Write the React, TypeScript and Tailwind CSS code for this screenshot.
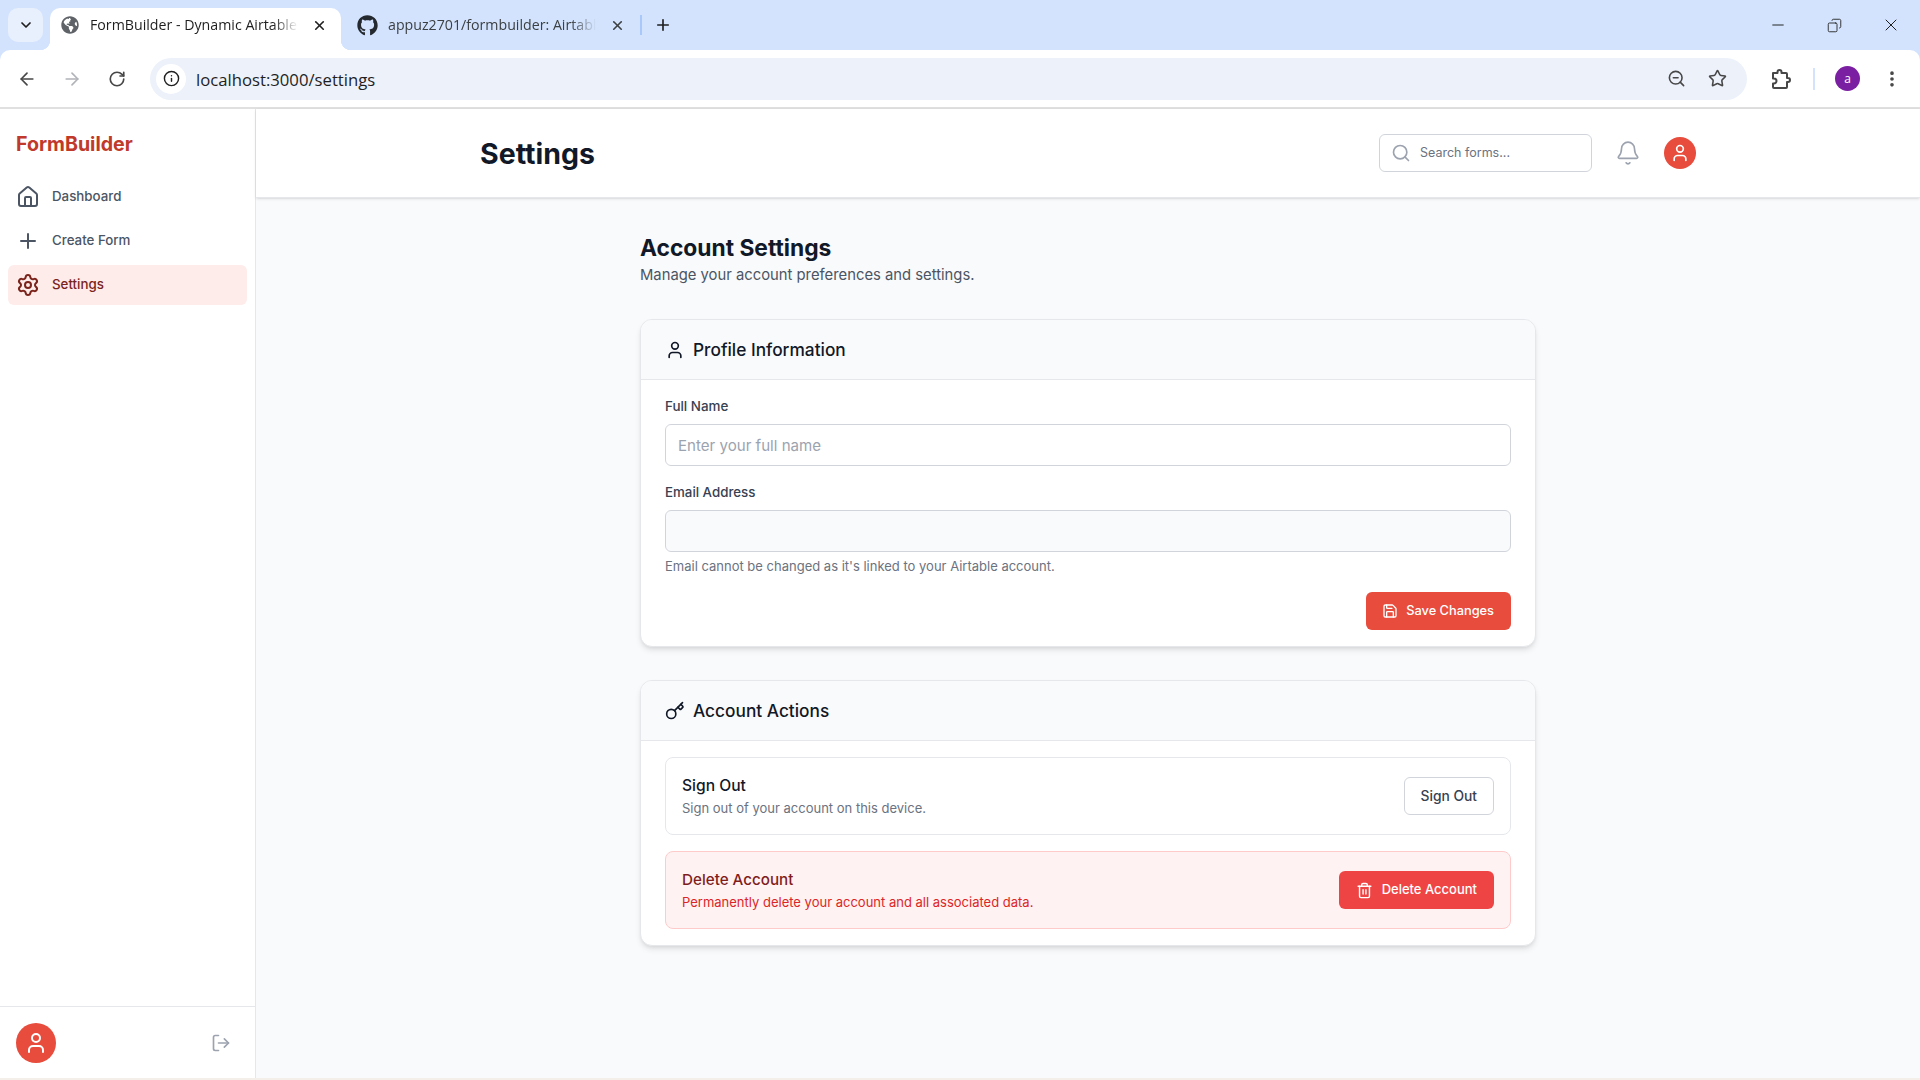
import {
  ArrowLeft, ArrowRight, Bell, ChevronDown, Copy, EllipsisVertical, House, Info, Key, LogOut, Minus, Plus,
  RotateCw, Save, Search, Settings, Star, Trash2, User, X, ZoomOut,
} from "lucide-react";
import { FaGithub, FaGlobeAmericas } from "react-icons/fa";

const chromeFont = { fontFamily: '"Open Sans", "Noto Sans", sans-serif' };

// chrome's extensions button, lucide's puzzle is turned the other way
function ExtensionIcon() {
  return (
    <svg width="22" height="22" viewBox="0 0 22 22" fill="none" stroke="#474747" strokeWidth="2" strokeLinejoin="round">
      <path d="M3 5h4.5V4a2 2 0 0 1 4 0v1H16a1 1 0 0 1 1 1v4h1a2 2 0 0 1 0 4h-1v5a1 1 0 0 1-1 1H4a1 1 0 0 1-1-1v-3.5h1a2.5 2.5 0 0 0 0-5H3z" />
    </svg>
  );
}

function BrowserChrome() {
  return (
    <div className="shrink-0 bg-[#d3e3fd]" style={chromeFont}>
      <div className="flex h-[50px] items-end pl-2">
        <div className="mb-2 mr-[7px] flex h-[34px] w-[35px] items-center justify-center rounded-[10px] bg-[#e9f0fd]">
          <ChevronDown size={16} strokeWidth={2.6} className="text-[#1f1f1f]" />
        </div>
        <div className="relative flex h-[42px] w-[291px] shrink-0 items-center rounded-t-[10px] bg-white pb-[8px] pl-[11px] pr-[14px]">
          <FaGlobeAmericas size={18} className="shrink-0 text-[#5f6368]" />
          <span className="ml-[11px] w-[208px] overflow-hidden whitespace-nowrap text-[14.2px] text-[#1f1f1f] [mask-image:linear-gradient(to_right,#000_88%,transparent)]">FormBuilder - Dynamic Airtable</span>
          <X size={15} strokeWidth={2.6} className="ml-auto shrink-0 text-[#1f1f1f]" />
          <div className="absolute bottom-0 left-[-10px] h-[10px] w-[10px] bg-[radial-gradient(circle_at_0_0,#d3e3fd_10px,#ffffff_10.5px)]" />
          <div className="absolute bottom-0 right-[-10px] h-[10px] w-[10px] bg-[radial-gradient(circle_at_100%_0,#d3e3fd_10px,#ffffff_10.5px)]" />
        </div>
        <div className="flex h-[42px] w-[340px] shrink-0 items-center pb-[8px] pl-[16px]">
          <FaGithub size={21} className="shrink-0 text-[#24292f]" />
          <span className="ml-[10px] w-[208px] shrink-0 overflow-hidden whitespace-nowrap text-[14.2px] text-[#3c4043] [mask-image:linear-gradient(to_right,#000_88%,transparent)]">appuz2701/formbuilder: Airtable</span>
          <X size={15} strokeWidth={2.6} className="ml-[14px] shrink-0 text-[#3c4043]" />
          <div className="ml-[15px] h-[20px] w-[2px] shrink-0 bg-[#a8c7fa]" />
          <Plus size={18} strokeWidth={2.2} className="ml-[12px] shrink-0 text-[#1f1f1f]" />
        </div>
        <div className="ml-auto flex h-[50px] items-center">
          <div className="flex w-[56px] justify-center"><Minus size={18} strokeWidth={1.3} className="text-[#1f1f1f]" /></div>
          <div className="flex w-[56px] justify-center"><Copy size={15} strokeWidth={1.4} className="-scale-x-100 text-[#1f1f1f]" /></div>
          <div className="flex w-[58px] justify-center"><X size={20} strokeWidth={1.2} className="text-[#1f1f1f]" /></div>
        </div>
      </div>
      <div className="flex h-[57px] items-center rounded-t-[10px] bg-white pl-[17px] pr-[15px]">
        <ArrowLeft size={20} strokeWidth={2} className="text-[#474747]" />
        <ArrowRight size={20} strokeWidth={2} className="ml-[25px] text-[#b0b3b8]" />
        <RotateCw size={18} strokeWidth={2.2} className="ml-[26px] text-[#474747]" />
        <div className="ml-[24px] flex h-[42px] w-[1597px] items-center rounded-full bg-[#ecf1fa] pl-[6px] pr-[20px]">
          <div className="flex h-[30px] w-[30px] items-center justify-center rounded-full bg-white">
            <Info size={17} strokeWidth={2} className="text-[#1f1f1f]" />
          </div>
          <span className="ml-[10px] pt-[2px] text-[16.7px] text-[#1f1f1f]">localhost:3000/settings</span>
          <ZoomOut size={19} strokeWidth={2} className="ml-auto text-[#474747]" />
          <Star size={19} strokeWidth={2} className="ml-[22px] text-[#474747]" />
        </div>
        <div className="ml-[23px]"><ExtensionIcon /></div>
        <div className="ml-[21px] h-[22px] w-[2px] bg-[#d3e3fd]" />
        <div className="ml-[20px] flex h-[25px] w-[25px] items-center justify-center rounded-full bg-[#7b1fa2] text-[12px] text-white">a</div>
        <EllipsisVertical size={20} strokeWidth={2.4} className="ml-[22px] text-[#474747]" />
      </div>
      <div className="h-[2px] bg-[#e0e0e0]" />
    </div>
  );
}

function Sidebar() {
  const items = [
    { label: "Dashboard", icon: House },
    { label: "Create Form", icon: Plus },
    { label: "Settings", icon: Settings, active: true },
  ];
  return (
    <aside className="flex w-[256px] shrink-0 flex-col border-r border-[#e5e7eb] bg-white">
      <div className="flex h-[68px] items-center px-4 pt-[3px]">
        <span className="text-[19.6px] font-bold text-[#c0392b]">FormBuilder</span>
      </div>
      <nav className="flex flex-col gap-1 px-2">
        {items.map((item) => (
          <div
            key={item.label}
            className={`flex h-10 items-center gap-3 rounded-md px-2 text-[13.3px] font-medium ${
              item.active ? "bg-[#fdecea] text-[#7b241c]" : "text-[#4b5563]"
            }`}
          >
            <item.icon size={24} strokeWidth={2} className={item.active ? "text-[#7b241c]" : "text-[#4b5563]"} />
            {item.label}
          </div>
        ))}
      </nav>
      <div className="mt-auto flex h-[72px] items-center justify-between border-t border-[#e5e7eb] pl-4 pr-[24px]">
        <div className="flex h-10 w-10 items-center justify-center rounded-full bg-[#e74c3c]">
          <User size={24} className="text-white" />
        </div>
        <LogOut size={20} className="text-[#9ca3af]" />
      </div>
    </aside>
  );
}

function Header() {
  return (
    <header className="h-[89px] shrink-0 border-b border-[#e5e7eb] bg-white shadow-sm">
      <div className="mx-auto flex h-full max-w-7xl items-center justify-between px-8">
        <h1 className="pt-[2px] text-[28.5px] font-bold text-[#111827]">Settings</h1>
        <div className="flex items-center gap-4">
          <div className="flex h-[38px] w-[213px] items-center gap-[9px] rounded-md border border-[#d1d5db] bg-white pl-[11px]">
            <Search size={20} className="text-[#9ca3af]" />
            <span className="text-[12.5px] text-[#6b7280]">Search forms...</span>
          </div>
          <div className="flex h-10 w-10 items-center justify-center">
            <Bell size={26} strokeWidth={1.5} className="text-[#9ca3af]" />
          </div>
          <div className="flex h-8 w-8 items-center justify-center rounded-full bg-[#e74c3c]">
            <User size={20} className="text-white" />
          </div>
        </div>
      </div>
    </header>
  );
}

function Card({ icon: Icon, title, children }: { icon: typeof User; title: string; children: React.ReactNode }) {
  return (
    <section className="overflow-hidden rounded-xl border border-[#e5e7eb] bg-white shadow-md">
      <div className="flex h-[60px] items-center gap-2 border-b border-[#e5e7eb] bg-[#f9fafb] px-6">
        <Icon size={20} className="text-[#111827]" />
        <h3 className="text-[17.3px] font-medium text-[#111827]">{title}</h3>
      </div>
      {children}
    </section>
  );
}

function Profile() {
  return (
    <Card icon={User} title="Profile Information">
      <div className="px-6 pb-4 pt-4">
        <label className="block text-[13.4px] font-medium leading-5 text-[#374151]">Full Name</label>
        <input
          placeholder="Enter your full name"
          className="mt-2 block h-[42px] w-full rounded-md border border-[#d1d5db] px-3 text-[15.1px] text-[#111827] placeholder:text-[#9ca3af]"
        />
        <label className="mt-4 block text-[13.3px] font-medium leading-5 text-[#374151]">Email Address</label>
        <input className="mt-2 block h-[42px] w-full rounded-md border border-[#d1d5db] bg-[#f9fafb] px-3" />
        <p className="mt-[6px] text-[13px] leading-4 text-[#6b7280]">Email cannot be changed as it's linked to your Airtable account.</p>
        <div className="mt-[18px] flex justify-end">
          <button className="flex h-[38px] items-center gap-2 rounded-md bg-[#e74c3c] pl-4 pr-[17px] text-[12.8px] font-medium text-white">
            <Save size={16} />
            Save Changes
          </button>
        </div>
      </div>
    </Card>
  );
}

function Actions() {
  return (
    <Card icon={Key} title="Account Actions">
      <div className="flex flex-col gap-4 px-6 py-4">
        <div className="flex h-[78px] items-center justify-between rounded-lg border border-[#e5e7eb] px-4">
          <div>
            <h4 className="text-[15.6px] font-medium leading-6 text-[#111827]">Sign Out</h4>
            <p className="text-[13px] leading-5 text-[#6b7280]">Sign out of your account on this device.</p>
          </div>
          <button className="h-[38px] rounded-md border border-[#d1d5db] bg-white px-4 text-[13.8px] font-medium text-[#374151]">Sign Out</button>
        </div>
        <div className="flex h-[78px] items-center justify-between rounded-lg border border-[#fecaca] bg-[#fef2f2] px-4">
          <div>
            <h4 className="text-[15.2px] font-medium leading-6 text-[#7f1d1d]">Delete Account</h4>
            <p className="text-[13px] leading-5 text-[#dc2626]">Permanently delete your account and all associated data.</p>
          </div>
          <button className="flex h-[38px] items-center gap-[9px] rounded-md bg-[#ef4444] px-[17px] text-[13px] font-medium text-white">
            <Trash2 size={17} />
            Delete Account
          </button>
        </div>
      </div>
    </Card>
  );
}

export default function App() {
  return (
    <div className="flex h-screen flex-col overflow-hidden bg-white" style={{ fontFamily: 'Inter, sans-serif' }}>
      <BrowserChrome />
      <div className="flex min-h-0 flex-1">
        <Sidebar />
        <div className="flex min-w-0 flex-1 flex-col bg-[#f9fafb]">
          <Header />
          <main className="mx-auto w-[896px] pt-[36px]">
            <h2 className="text-[22.8px] font-bold leading-7 text-[#111827]">Account Settings</h2>
            <p className="text-[14.8px] leading-[26px] text-[#4b5563]">Manage your account preferences and settings.</p>
            <div className="mt-[31px] flex flex-col gap-[33px]">
              <Profile />
              <Actions />
            </div>
          </main>
        </div>
      </div>
      <div className="h-[2px] shrink-0 bg-[#f5efea]" />
    </div>
  );
}
